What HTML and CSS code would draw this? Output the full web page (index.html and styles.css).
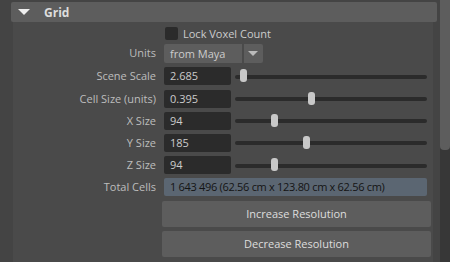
FILE: index.html
```html
<!DOCTYPE html>
<html lang="en">
<head>
    <meta charset="UTF-8">
    <meta name="viewport" content="width=device-width, initial-scale=1.0">
    <title>Grid</title>
    <link rel="stylesheet" href="styles.css">
</head>
<body>

<div class="window">
    <div class="panel">
        <div class="section-head">
            <span class="caret"></span>
            <span class="section-title">Grid</span>
        </div>

        <div class="section-body">
            <div class="form">
                <!-- Lock checkbox -->
                <span></span>
                <label class="check">
                    <span class="box"></span>
                    <span>Lock Voxel Count</span>
                </label>

                <span class="label">Units</span>
                <div class="dropdown">
                    <span class="dropdown-value">from Maya</span>
                    <span class="dropdown-arrow"></span>
                </div>

                <span class="label">Scene Scale</span>
                <div class="field">
                    <span class="num">2.685</span>
                    <div class="slider"><div class="track"></div><div class="thumb" style="left: 5px"></div></div>
                </div>

                <span class="label">Cell Size (units)</span>
                <div class="field">
                    <span class="num">0.395</span>
                    <div class="slider"><div class="track"></div><div class="thumb" style="left: 73px"></div></div>
                </div>

                <span class="label">X Size</span>
                <div class="field">
                    <span class="num">94</span>
                    <div class="slider"><div class="track"></div><div class="thumb" style="left: 36px"></div></div>
                </div>

                <span class="label">Y Size</span>
                <div class="field">
                    <span class="num">185</span>
                    <div class="slider"><div class="track"></div><div class="thumb" style="left: 68px"></div></div>
                </div>

                <span class="label">Z Size</span>
                <div class="field">
                    <span class="num">94</span>
                    <div class="slider"><div class="track"></div><div class="thumb" style="left: 36px"></div></div>
                </div>

                <span class="label">Total Cells</span>
                <div class="readout">1 643 496 (62.56 cm x 123.80 cm x 62.56 cm)</div>
            </div>

            <div class="actions">
                <button>Increase Resolution</button>
                <button>Decrease Resolution</button>
            </div>
        </div>
    </div>

    <div class="scrollbar">
        <div class="scroll-thumb"></div>
    </div>
</div>

</body>
</html>
```

FILE: styles.css
```css
body {
    margin: 0;
    padding: 0;
    font-family: "Open Sans", "Noto Sans", sans-serif;
    font-size: 11px;
    background-color: #444444;
    overflow: hidden;
}

.window {
    display: flex;
    width: 450px;
    height: 262px;
    background-color: #444444;
}

.panel {
    flex: 1;
    display: flex;
    flex-direction: column;
    padding: 2px 3px 0 11px;
}

.section-head {
    height: 20px;
    background-color: #5d5d5d;
    border-radius: 2px;
    display: flex;
    align-items: center;
}

.caret {
    width: 0;
    height: 0;
    margin-left: 7px;
    border-left: 6px solid transparent;
    border-right: 6px solid transparent;
    border-top: 6px solid #eeeeee;
}

.section-title {
    margin-left: 14px;
    color: #dddddd;
    font-weight: bold;
    font-size: 12px;
}

.section-body {
    flex: 1;
    margin: 0 4px 0 2px;
    background-color: #4a4a4a;
    padding-top: 5px;
}

.form {
    display: grid;
    grid-template-columns: 143px 263px;
    grid-template-rows: 13px 19px repeat(6, 18px);
    column-gap: 8px;
    row-gap: 4.2px;
}

.label {
    color: #bdbdbd;
    text-align: right;
    line-height: 18px;
    white-space: nowrap;
}

.check {
    display: flex;
    align-items: center;
    color: #cccccc;
    margin-left: 1px;
}

.check .box {
    width: 13px;
    height: 13px;
    background-color: #2b2b2b;
    border-radius: 2px;
    margin-right: 5px;
}

.dropdown {
    display: flex;
    gap: 2px;
    width: 99px;
}

.dropdown-value {
    width: 72px;
    padding-left: 6px;
    background-color: #5d5d5d;
    color: #cccccc;
    line-height: 19px;
    border-radius: 2px 0 0 2px;
}

.dropdown-arrow {
    width: 19px;
    background-color: #5d5d5d;
    border-radius: 0 2px 2px 0;
    position: relative;
}

.dropdown-arrow::after {
    content: "";
    position: absolute;
    left: 4px;
    top: 7px;
    border-left: 5px solid transparent;
    border-right: 5px solid transparent;
    border-top: 5px solid #bbbbbb;
}

.field {
    display: flex;
    gap: 4px;
}

.num {
    width: 61px;
    padding-left: 6px;
    background-color: #2b2b2b;
    color: #cccccc;
    line-height: 18px;
    border-radius: 2px;
}

.slider {
    flex: 1;
    position: relative;
    display: flex;
    align-items: center;
}

.track {
    width: 100%;
    height: 4px;
    background-color: #2b2b2b;
    border-radius: 2px;
    margin-top: 1px;
}

.slider .thumb {
    position: absolute;
    top: 2px;
    width: 7px;
    height: 13px;
    background-color: #c8c8c8;
    border-radius: 3px;
}

.readout {
    background-color: #5b6672;
    color: #141414;
    line-height: 18px;
    padding-left: 6px;
    border-radius: 2px;
    white-space: nowrap;
    letter-spacing: -0.3px;
}

.actions {
    display: flex;
    flex-direction: column;
    gap: 4px;
    margin: 4.6px 2px 0 149px;
}

.actions button {
    height: 26px;
    background-color: #5d5d5d;
    color: #dddddd;
    border: none;
    border-radius: 2px;
    font-family: inherit;
    font-size: 11px;
    padding: 0;
}

.scrollbar {
    width: 10px;
    background-color: #373737;
}

.scroll-thumb {
    height: 150px;
    background-color: #5d5d5d;
    border-radius: 0 0 4px 4px;
}
```
